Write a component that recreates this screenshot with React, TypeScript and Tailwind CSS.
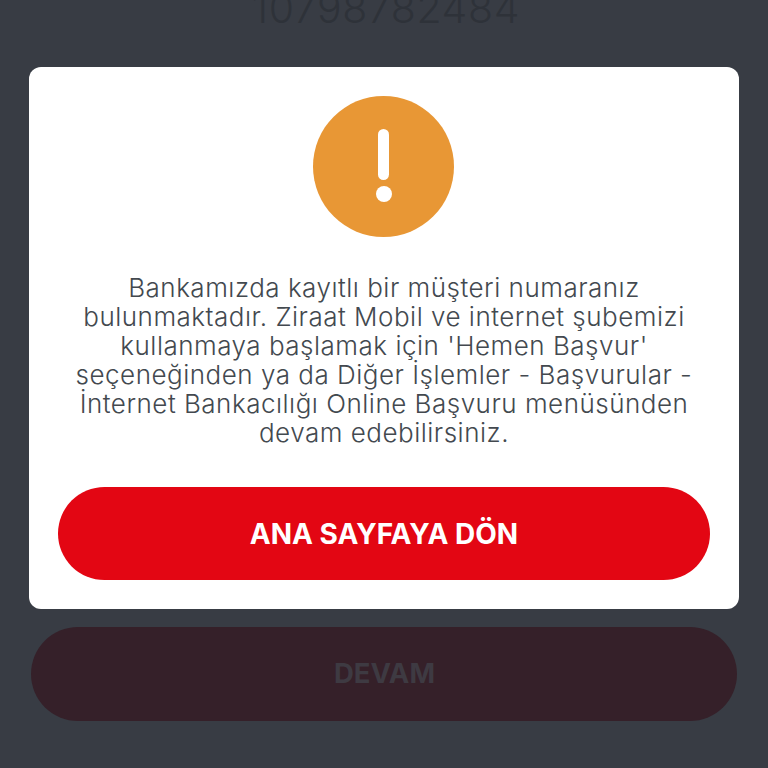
import React from 'react';

const lines = [
    'Bankamızda kayıtlı bir müşteri numaranız',
    'bulunmaktadır. Ziraat Mobil ve internet şubemizi',
    "kullanmaya başlamak için 'Hemen Başvur'",
    'seçeneğinden ya da Diğer İşlemler - Başvurular -',
    'İnternet Bankacılığı Online Başvuru menüsünden',
    'devam edebilirsiniz.',
];

export default function App() {
    return (
        <div className="relative w-[768px] h-[768px] overflow-hidden bg-[#383c44] font-['Inter','Liberation_Sans',sans-serif]">
            {/* dimmed page behind the dialog */}
            <div className="flex flex-col h-full">
                <div className="-mt-[17px] h-[644px] pl-[4px] text-center text-[41px] leading-[50px] font-light tracking-[0.6px] text-[#2e3239]">
                    10798782484
                </div>
                <div className="mx-[31px] h-[94px] rounded-full bg-[#352029] flex items-center justify-center pl-[1px] text-[27.5px] font-bold text-[#3e3a42]">
                    DEVAM
                </div>
            </div>

            {/* dialog */}
            <div className="absolute left-[29px] top-[67px] w-[710px] h-[542px] rounded-[12px] bg-white flex flex-col items-center px-[29px] pt-[29px]">
                <div className="w-[141px] h-[141px] -ml-[1px] rounded-full bg-[#e89735] flex flex-col items-center pt-[33px]">
                    <div className="w-[11px] h-[51px] rounded-full bg-white" />
                    <div className="w-[16px] h-[16px] rounded-full bg-white mt-[6px]" />
                </div>
                <div className="mt-[36px] text-center text-[26px] leading-[29px] tracking-[0.5px] font-light text-[#43494f] whitespace-nowrap">
                    {lines.map((line) => (
                        <div key={line}>{line}</div>
                    ))}
                </div>
                <div className="mt-[40px] w-full h-[93px] rounded-full bg-[#e30613] flex items-center justify-center text-[28px] font-bold text-white">
                    ANA SAYFAYA DÖN
                </div>
            </div>
        </div>
    );
}
